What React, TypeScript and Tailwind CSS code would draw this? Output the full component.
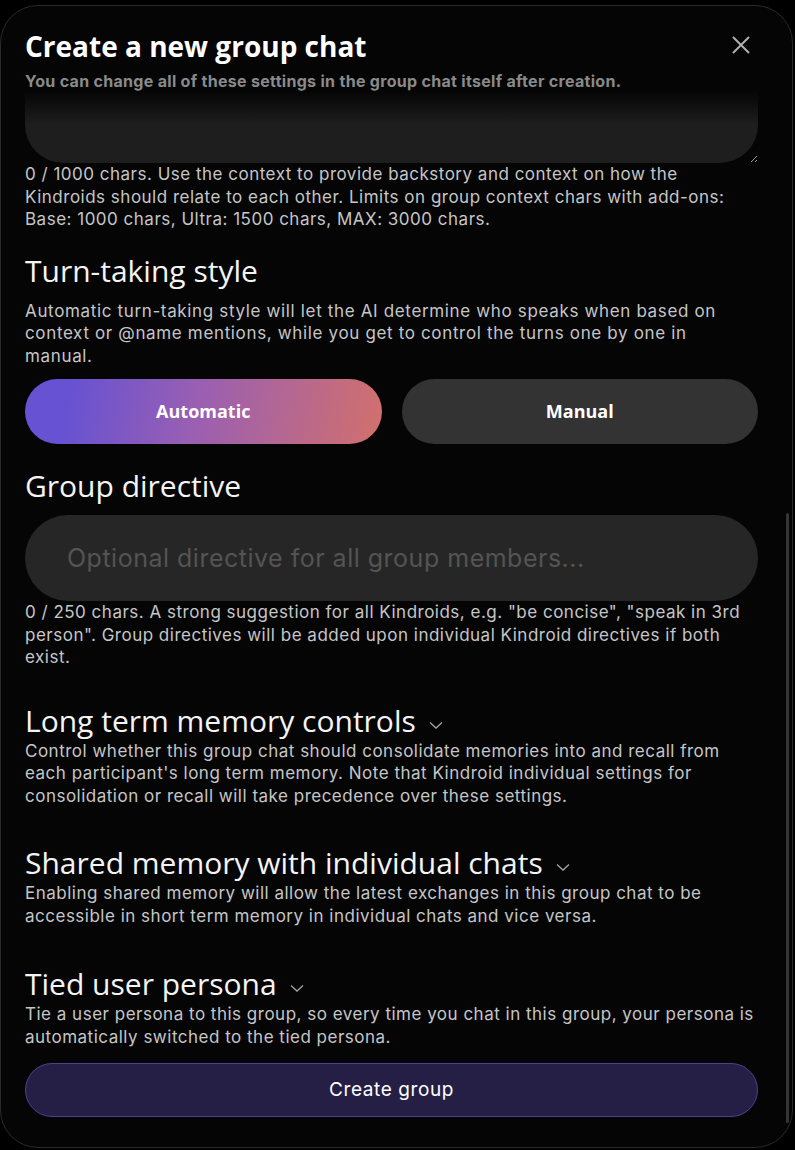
import { useLayoutEffect, useRef, useState } from "react";

const HEAD = { fontFamily: '"Open Sans", "Noto Sans", sans-serif' };
const BODY = { fontFamily: 'Inter, "Noto Sans", sans-serif' };

const HINT = "text-[17px] leading-[22.5px] tracking-[0.5px] text-[#c6c6c6]";
const TITLE = "text-[30px] leading-[36px] text-[#f4f4f4]";

/* small thin chevron next to the collapsible section titles */
function Chevron() {
  return (
    <svg width="16" height="10" viewBox="0 0 16 10" className="ml-3 mt-2 shrink-0">
      <path d="M2 2.5 L8 8 L14 2.5" fill="none" stroke="#a3a3a3" strokeWidth="1.3" />
    </svg>
  );
}

function Collapsible({ title, body, className }: { title: string; body: string; className?: string }) {
  return (
    <div className={className}>
      <div className="flex items-center">
        <h3 className={TITLE} style={HEAD}>{title}</h3>
        <Chevron />
      </div>
      <p className={"mt-px " + HINT}>{body}</p>
    </div>
  );
}

export default function App() {
  const [mode, setMode] = useState<"auto" | "manual">("auto");
  const scroller = useRef<HTMLDivElement>(null);

  // modal opens scrolled to the bottom of the form
  useLayoutEffect(() => {
    if (scroller.current) scroller.current.scrollTop = scroller.current.scrollHeight;
  }, []);

  const pill = (active: boolean) =>
    active
      ? "h-[65px] rounded-full bg-[linear-gradient(100deg,#6652d2_12%,#9a5fb2_48%,#d2706c_100%)] text-[18px] font-bold text-white"
      : "h-[65px] rounded-full bg-[#333333] text-[18px] font-bold text-white";

  return (
    <div className="h-[1150px] w-[795px] overflow-hidden bg-black pt-[5px]">
      <div className="relative flex h-[1143px] w-[793px] flex-col rounded-[38px] border border-[#2a2a2a] bg-[#050505]">
        {/* Header */}
        <div className="px-6 pt-[22px]">
          <h1 className="text-[28px] font-bold leading-[36px] text-white" style={HEAD}>
            Create a new group chat
          </h1>
          <p className="mt-[7px] text-[16px] font-bold leading-[20px] tracking-[0.3px] text-[#8a8a8a]" style={BODY}>
            You can change all of these settings in the group chat itself after creation.
          </p>
          <button className="absolute right-[38px] top-[26px] p-1" aria-label="Close">
            <svg width="18" height="18" viewBox="0 0 18 18">
              <path d="M1 1 L17 17 M17 1 L1 17" stroke="#b0b0b0" strokeWidth="2" />
            </svg>
          </button>
        </div>

        {/* Scrollable form */}
        <div className="relative flex min-h-0 flex-1 flex-col">
          <div className="pointer-events-none absolute inset-x-0 top-0 z-10 h-[34px] bg-gradient-to-b from-[#050505] to-transparent" />
          <div ref={scroller} className="min-h-0 flex-1 overflow-hidden pb-[30px] pl-6 pr-[34px]" style={BODY}>
            <textarea
              className="block h-[140px] w-full resize-y rounded-[38px] bg-[#1e1e1e] px-6 py-5 text-[16px] text-white outline-none"
              style={BODY}
            />
            <p className={HINT}>
              0 / 1000 chars. Use the context to provide backstory and context on how the Kindroids should relate to
              each other. Limits on group context chars with add-ons: Base: 1000 chars, Ultra: 1500 chars, MAX: 3000
              chars.
            </p>

            <h2 className={"mt-[22px] " + TITLE} style={HEAD}>Turn-taking style</h2>
            <p className="mt-[11px] text-[17px] leading-[22.5px] tracking-[0.65px] text-[#c6c6c6]">
              Automatic turn-taking style will let the AI determine who speaks when based on context or @name
              mentions, while you get to control the turns one by one in manual.
            </p>
            <div className="mt-[12px] grid grid-cols-2 gap-5">
              <button onClick={() => setMode("auto")} className={pill(mode === "auto")} style={HEAD}>
                Automatic
              </button>
              <button onClick={() => setMode("manual")} className={pill(mode === "manual")} style={HEAD}>
                Manual
              </button>
            </div>

            <h2 className={"mt-[24px] " + TITLE} style={HEAD}>Group directive</h2>
            <input
              placeholder="Optional directive for all group members..."
              className="mt-[11px] block h-[86px] w-full rounded-full bg-[#262626] px-[42px] text-[25px] tracking-[0.5px] text-white outline-none placeholder:text-[#545454]"
              style={BODY}
            />
            <p className={HINT}>
              0 / 250 chars. A strong suggestion for all Kindroids, e.g. "be concise", "speak in 3rd person". Group
              directives will be added upon individual Kindroid directives if both exist.
            </p>

            <Collapsible
              className="mt-[34px]"
              title="Long term memory controls"
              body="Control whether this group chat should consolidate memories into and recall from each participant's long term memory. Note that Kindroid individual settings for consolidation or recall will take precedence over these settings."
            />
            <Collapsible
              className="mt-[38px]"
              title="Shared memory with individual chats"
              body="Enabling shared memory will allow the latest exchanges in this group chat to be accessible in short term memory in individual chats and vice versa."
            />
            <Collapsible
              className="mt-[39px]"
              title="Tied user persona"
              body="Tie a user persona to this group, so every time you chat in this group, your persona is automatically switched to the tied persona."
            />

            <button className="mt-[15px] h-[54px] w-full rounded-full border border-[#4b4190] bg-[#261f45] text-[19px] tracking-[0.6px] text-white">
              Create group
            </button>
          </div>
        </div>

        {/* scrollbar thumb */}
        <div className="absolute right-[3px] top-[507px] h-[610px] w-[3px] rounded-full bg-[#353535]" />
      </div>
    </div>
  );
}
